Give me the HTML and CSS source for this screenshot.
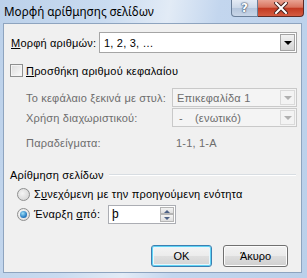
FILE: index.html
```html
<!DOCTYPE html>
<html lang="el">
<head>
    <meta charset="UTF-8">
    <title>Μορφή αρίθμησης σελίδων</title>
    <link rel="stylesheet" href="styles.css">
</head>
<body>
    <div class="window">
        <div class="titlebar">
            <span class="title">Μορφή αρίθμησης σελίδων</span>
            <div class="caption-btns">
                <span class="cap-btn help">?</span>
                <span class="cap-btn close">
                    <svg width="14" height="12" viewBox="0 0 14 12">
                        <path d="M2 1 L12 11 M12 1 L2 11" stroke="#4a2420" stroke-width="4" stroke-linecap="square"/>
                        <path d="M2 1 L12 11 M12 1 L2 11" stroke="#fff" stroke-width="2" stroke-linecap="square"/>
                    </svg>
                </span>
            </div>
        </div>

        <div class="client">
            <div class="format-row">
                <label class="format-label"><u>Μ</u>ορφή αριθμών:</label>
                <div class="combo">
                    <span class="combo-text">1, 2, 3, …</span>
                    <span class="combo-arrow"></span>
                </div>
            </div>

            <div class="check-row">
                <span class="checkbox"></span>
                <span><u>Π</u>ροσθήκη αριθμού κεφαλαίου</span>
            </div>

            <div class="chapter">
                <div class="field-row">
                    <span class="field-label">Το κεφάλαιο ξεκινά με στυλ:</span>
                    <div class="combo disabled">
                        <span class="combo-text">Επικεφαλίδα 1</span>
                        <span class="combo-arrow"></span>
                    </div>
                </div>
                <div class="field-row second">
                    <span class="field-label">Χρήση διαχωριστικού:</span>
                    <div class="combo disabled">
                        <span class="combo-text"><span class="dash">-</span>(ενωτικό)</span>
                        <span class="combo-arrow"></span>
                    </div>
                </div>
                <div class="field-row examples">
                    <span class="field-label">Παραδείγματα:</span>
                    <span class="example-text">1-1, 1-A</span>
                </div>
            </div>

            <div class="group-head">
                <span>Αρίθμηση σελίδων</span>
                <span class="group-line"></span>
            </div>

            <div class="radio-row">
                <span class="radio"></span>
                <span>Σ<u>υ</u>νεχόμενη με την προηγούμενη ενότητα</span>
            </div>
            <div class="radio-row start">
                <span class="radio checked"></span>
                <span class="start-label">Έναρξη <u>α</u>πό:</span>
                <div class="spin">
                    <span class="spin-text">þ</span>
                    <span class="spin-btns">
                        <span class="spin-up"></span>
                        <span class="spin-down"></span>
                    </span>
                </div>
            </div>

            <div class="buttons">
                <button class="btn default">OK</button>
                <button class="btn">Άκυρο</button>
            </div>
        </div>
    </div>
</body>
</html>
```

FILE: styles.css
```css
body {
    margin: 0;
    font-family: "Liberation Sans", Arial, sans-serif;
    font-size: 11px;
    color: #000;
}

.window {
    width: 307px;
    height: 278px;
    box-sizing: border-box;
    padding: 0 5px 5px 3px;
    display: flex;
    flex-direction: column;
    background: linear-gradient(100deg, #bcd1ea 0%, #c9dbf0 30%, #e2ebf6 48%, #c3d6ee 62%, #bad0ea 100%);
}

/* caption */
.titlebar {
    height: 23px;
    display: flex;
    align-items: flex-start;
    margin-right: -2px;
}

.title {
    font-family: "Noto Sans", sans-serif;
    font-size: 11.7px;
    padding: 3px 0 0 1px;
    line-height: 16px;
}

.caption-btns {
    margin-left: auto;
    display: flex;
}

.cap-btn {
    height: 17px;
    box-sizing: border-box;
    display: flex;
    align-items: center;
    justify-content: center;
    border: 1px solid #6a7f99;
    border-top: none;
}

.help {
    width: 27px;
    border-radius: 0 0 0 4px;
    background: linear-gradient(#e4ebf4 0%, #ccd8e8 48%, #b5c6dc 52%, #c8d6e8 100%);
    color: #fff;
    font-family: "DejaVu Sans", sans-serif;
    font-weight: bold;
    font-size: 12px;
    text-shadow: 0 0 1px #3b4f69, 0 0 1px #3b4f69, 0 0 2px #3b4f69;
}

.close {
    width: 46px;
    border-color: #5f2a25;
    border-left: none;
    border-radius: 0 0 4px 0;
    background: linear-gradient(#e9a393 0%, #d9735e 45%, #c23a22 52%, #d45c42 100%);
}

/* client area */
.client {
    flex: 1;
    background: #f0f0f0;
    border: 1px solid #8ea4bf;
    padding: 8px 0 0 6px;
    display: flex;
    flex-direction: column;
    letter-spacing: 0.2px;
}

.format-row {
    display: flex;
    align-items: center;
    height: 21px;
}

.format-label {
    width: 88px;
    margin-left: 1px;
}

.combo {
    display: flex;
    align-items: center;
    box-sizing: border-box;
    height: 21px;
    width: 198px;
    background: #fff;
    border: 1px solid #a5a5a5;
    padding: 1px;
}

.combo-text {
    flex: 1;
    padding-left: 3px;
    white-space: pre;
}

.combo-arrow {
    width: 15px;
    height: 100%;
    box-sizing: border-box;
    border: 1px solid #a3a3a3;
    background: linear-gradient(#f2f2f2, #d4d4d4);
    position: relative;
}

.combo-arrow::after {
    content: '';
    position: absolute;
    left: 3px;
    top: 6px;
    border-left: 4px solid transparent;
    border-right: 4px solid transparent;
    border-top: 4px solid #000;
}

.combo.disabled {
    width: 125px;
    height: 19px;
    background: #f4f4f4;
    border-color: #c9c9c9;
    color: #6d6d6d;
}

.combo.disabled .combo-arrow {
    border-color: #dadada;
    background: #f3f3f3;
}

.combo.disabled .combo-arrow::after {
    top: 5px;
    border-top-color: #b0b0b0;
}

.dash {
    display: inline-block;
    width: 16px;
    padding-left: 2px;
}

.check-row {
    display: flex;
    align-items: center;
    height: 13px;
    margin-top: 11px;
}

.checkbox {
    width: 13px;
    height: 13px;
    box-sizing: border-box;
    border: 1px solid #8e8f8f;
    background: linear-gradient(135deg, #dcdcdc, #fbfbfb);
    box-shadow: inset 0 0 0 1px #f4f4f4;
    margin-right: 3px;
}

.chapter {
    color: #6d6d6d;
    margin-top: 11px;
}

.field-row {
    display: flex;
    align-items: center;
    padding-left: 16px;
}

.field-row.second {
    margin-top: 1px;
}

.field-label {
    width: 146px;
}

.field-row.examples {
    height: 14px;
    margin-top: 9px;
}

.example-text {
    padding-left: 4px;
}

.group-head {
    display: flex;
    align-items: center;
    height: 13px;
    margin-top: 18px;
}

.group-line {
    flex: 1;
    margin: 0 5px;
    border-top: 1px solid #d8dde2;
    border-bottom: 1px solid #fff;
}

.radio-row {
    display: flex;
    align-items: center;
    height: 16px;
    margin-top: 5px;
    padding-left: 7px;
}

.radio-row.start {
    height: 20px;
    margin-top: 2px;
}

.radio {
    width: 13px;
    height: 13px;
    box-sizing: border-box;
    border-radius: 50%;
    border: 1px solid #8e8f8f;
    background: radial-gradient(circle at 40% 40%, #f4f4f4, #cfcfcf);
    margin-right: 4px;
    position: relative;
}

.radio.checked {
    background: radial-gradient(circle at 40% 40%, #fdfdfd, #d6d6d6);
}

.radio.checked::after {
    content: '';
    position: absolute;
    left: 2px;
    top: 2px;
    width: 7px;
    height: 7px;
    border-radius: 50%;
    background: radial-gradient(circle at 40% 35%, #9ee0f7, #2a7fc4 60%, #16559a);
}

.start-label {
    width: 74px;
}

.spin {
    display: flex;
    box-sizing: border-box;
    width: 68px;
    height: 19px;
    background: #fff;
    border: 1px solid #abadb3;
    padding: 1px;
}

.spin-text {
    flex: 1;
    padding-left: 2px;
    line-height: 15px;
    font-size: 12px;
}

.spin-btns {
    display: flex;
    flex-direction: column;
    width: 14px;
}

.spin-up, .spin-down {
    flex: 1;
    box-sizing: border-box;
    border: 1px solid #b5b5b5;
    background: linear-gradient(#f4f4f4, #dedede);
    position: relative;
}

.spin-up::after, .spin-down::after {
    content: '';
    position: absolute;
    left: 3px;
    top: 2px;
    border-left: 3px solid transparent;
    border-right: 3px solid transparent;
}

.spin-up::after { border-bottom: 3px solid #4d6185; }
.spin-down::after { border-top: 3px solid #4d6185; }

.buttons {
    display: flex;
    justify-content: flex-end;
    gap: 11px;
    margin-top: 21px;
    padding-right: 13px;
}

.btn {
    font-family: "Liberation Sans", Arial, sans-serif;
    font-size: 11px;
    width: 65px;
    height: 22px;
    border: 1px solid #707070;
    border-radius: 3px;
    background: linear-gradient(#f2f2f2 0%, #ebebeb 48%, #dddddd 52%, #cfcfcf 100%);
    box-shadow: inset 0 0 0 1px #fcfcfc;
    padding: 0;
}

.btn.default {
    width: 61px;
    border-color: #3c7fb1;
    box-shadow: inset 0 0 0 1px #5fd3f5, inset 0 0 0 2px #e8f6fc;
    background: linear-gradient(#f4f4f4 0%, #ececec 48%, #dfdfdf 52%, #d3d3d3 100%);
}
```
